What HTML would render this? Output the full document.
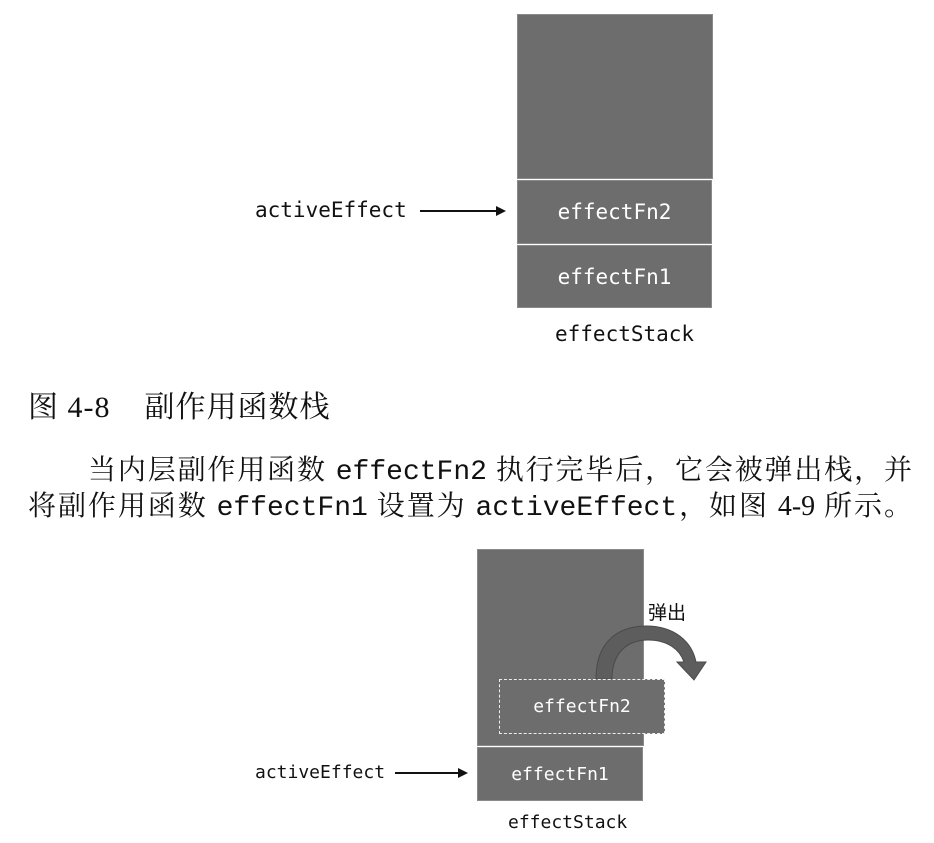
<!DOCTYPE html>
<html><head><meta charset="utf-8"><style>
body{margin:0;width:934px;height:843px;background:#fff;position:relative;overflow:hidden;font-family:"Liberation Serif","Noto Serif CJK SC",serif;}
.a{position:absolute;}
.box{position:absolute;background:#6d6d6d;border:1px solid #8a8a8a;box-sizing:border-box;color:#fff;font-family:"DejaVu Sans Mono","Liberation Mono",monospace;font-size:21px;display:flex;align-items:center;justify-content:center;}
.lbl{position:absolute;font-family:"DejaVu Sans Mono","Liberation Mono",monospace;font-size:21px;color:#111;white-space:nowrap;}
.ln{position:absolute;font-size:28px;color:#111;text-align:justify;text-align-last:justify;white-space:nowrap;}
.m{font-family:"Liberation Mono",monospace;font-weight:normal;}
</style></head><body>
<div class="box" style="left:517px;top:14px;width:196px;height:165px;"></div>
<div class="box" style="left:517px;top:180px;width:195px;height:64px;">effectFn2</div>
<div class="box" style="left:517px;top:245px;width:195px;height:63px;">effectFn1</div>
<div class="lbl" style="left:255px;top:198px;">activeEffect</div>
<svg class="a" style="left:0;top:0" width="934" height="843">
<line x1="420" y1="211" x2="498" y2="211" stroke="#111" stroke-width="2"/>
<polygon points="506,211 496,206 496,216" fill="#111"/>
<line x1="395" y1="773" x2="460" y2="773" stroke="#111" stroke-width="2"/>
<polygon points="468,773 458,768 458,778" fill="#111"/>
</svg>
<div class="lbl" style="left:555px;top:322px;">effectStack</div>
<div class="a" style="left:28px;top:382px;font-size:30px;color:#111;white-space:nowrap;letter-spacing:1px;">图 4-8&nbsp;&nbsp;&nbsp;&nbsp;副作用函数栈</div>
<div class="ln" style="left:88px;top:448px;width:824px;">当内层副作用函数 <span class="m">effectFn2</span> 执行完毕后，它会被弹出栈，并</div>
<div class="ln" style="left:28px;top:484px;width:884px;">将副作用函数 <span class="m">effectFn1</span> 设置为 <span class="m">activeEffect</span>，如图 4-9 所示。</div>
<div class="box" style="left:477px;top:549px;width:167px;height:197px;"></div>
<div class="box" style="left:477px;top:747px;width:166px;height:54px;font-size:18px;">effectFn1</div>
<svg class="a" style="left:0;top:0" width="934" height="843">
<path d="M596,679 C596,640 620,626 646,626 C675,626 692,642 696,662 L706,662 L694,680 L677,662 L684,662 C680,650 668,640 648,640 C628,640 612,652 612,679 Z" fill="#5d5d5d" stroke="#4a4a4a" stroke-width="1"/>
</svg>
<div class="box" style="left:499px;top:679px;width:166px;height:55px;border:1.5px dashed #eee;font-size:18px;">effectFn2</div>
<div class="lbl" style="left:648px;top:598px;font-family:'Noto Sans CJK SC',sans-serif;font-size:19px;">弹出</div>
<div class="lbl" style="left:255px;top:762px;font-size:18px;">activeEffect</div>
<div class="lbl" style="left:508px;top:812px;font-size:18px;">effectStack</div>
</body></html>
